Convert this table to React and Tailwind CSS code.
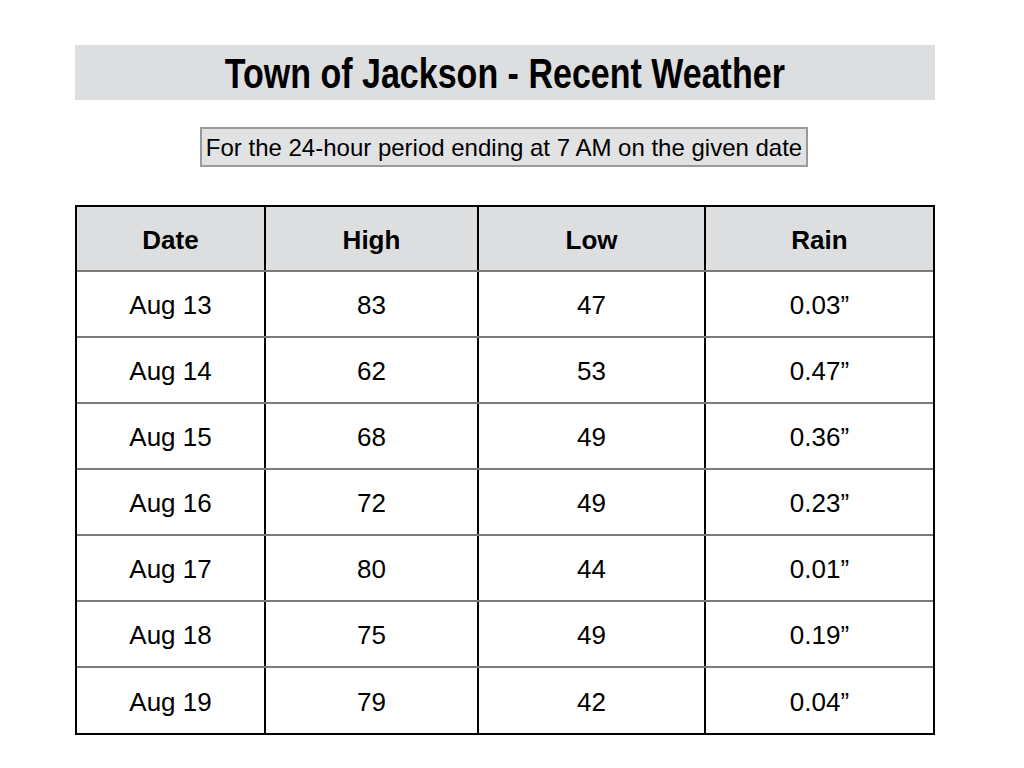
import React from "react";

const rows = [
  ["Aug 13", "83", "47", "0.03”"],
  ["Aug 14", "62", "53", "0.47”"],
  ["Aug 15", "68", "49", "0.36”"],
  ["Aug 16", "72", "49", "0.23”"],
  ["Aug 17", "80", "44", "0.01”"],
  ["Aug 18", "75", "49", "0.19”"],
  ["Aug 19", "79", "42", "0.04”"],
];

const colW = ["w-[189px]", "w-[213px]", "w-[227px]", "w-[227px]"];

export default function App() {
  return (
    <div className="min-h-[768px] w-[1024px] bg-white font-['Liberation_Sans',Arial,sans-serif] text-black">
      <div className="pt-[45px] pl-[75px]">
        <div className="flex h-[55px] w-[860px] items-center justify-center bg-[#dddee0]">
          <h1 className="origin-center scale-x-[0.81] whitespace-nowrap pt-[2px] text-[42px] font-bold leading-none">
            Town of Jackson - Recent Weather
          </h1>
        </div>
      </div>
      <div className="mt-[27px] flex justify-center pr-[16px]">
        <div className="flex h-[40px] w-[608px] items-center justify-center whitespace-nowrap border-2 border-[#9a9a9a] bg-[#e1e2e4] pt-[1px] text-[24px] leading-none">
          For the 24-hour period ending at 7 AM on the given date
        </div>
      </div>
      <div className="mt-[38px] pl-[75px]">
        <div className="w-[860px] border-2 border-black">
          <div className="flex h-[65px] border-b-2 border-[#7a7a7a] bg-[#dddee0] text-[26px] font-bold">
            {["Date", "High", "Low", "Rain"].map((h, i) => (
              <div
                key={h}
                className={`flex items-center justify-center pt-[3px] ${colW[i]} ${i < 3 ? "border-r-2 border-black" : ""}`}
              >
                {h}
              </div>
            ))}
          </div>
          {rows.map((r, ri) => (
            <div
              key={r[0]}
              className={`flex text-[26px] ${ri < rows.length - 1 ? "h-[66px] border-b-2 border-[#7a7a7a]" : "h-[65px]"}`}
            >
              {r.map((c, i) => (
                <div
                  key={i}
                  className={`flex items-center justify-center pt-[3px] ${colW[i]} ${i < 3 ? "border-r-2 border-black" : ""}`}
                >
                  {c}
                </div>
              ))}
            </div>
          ))}
        </div>
      </div>
    </div>
  );
}
